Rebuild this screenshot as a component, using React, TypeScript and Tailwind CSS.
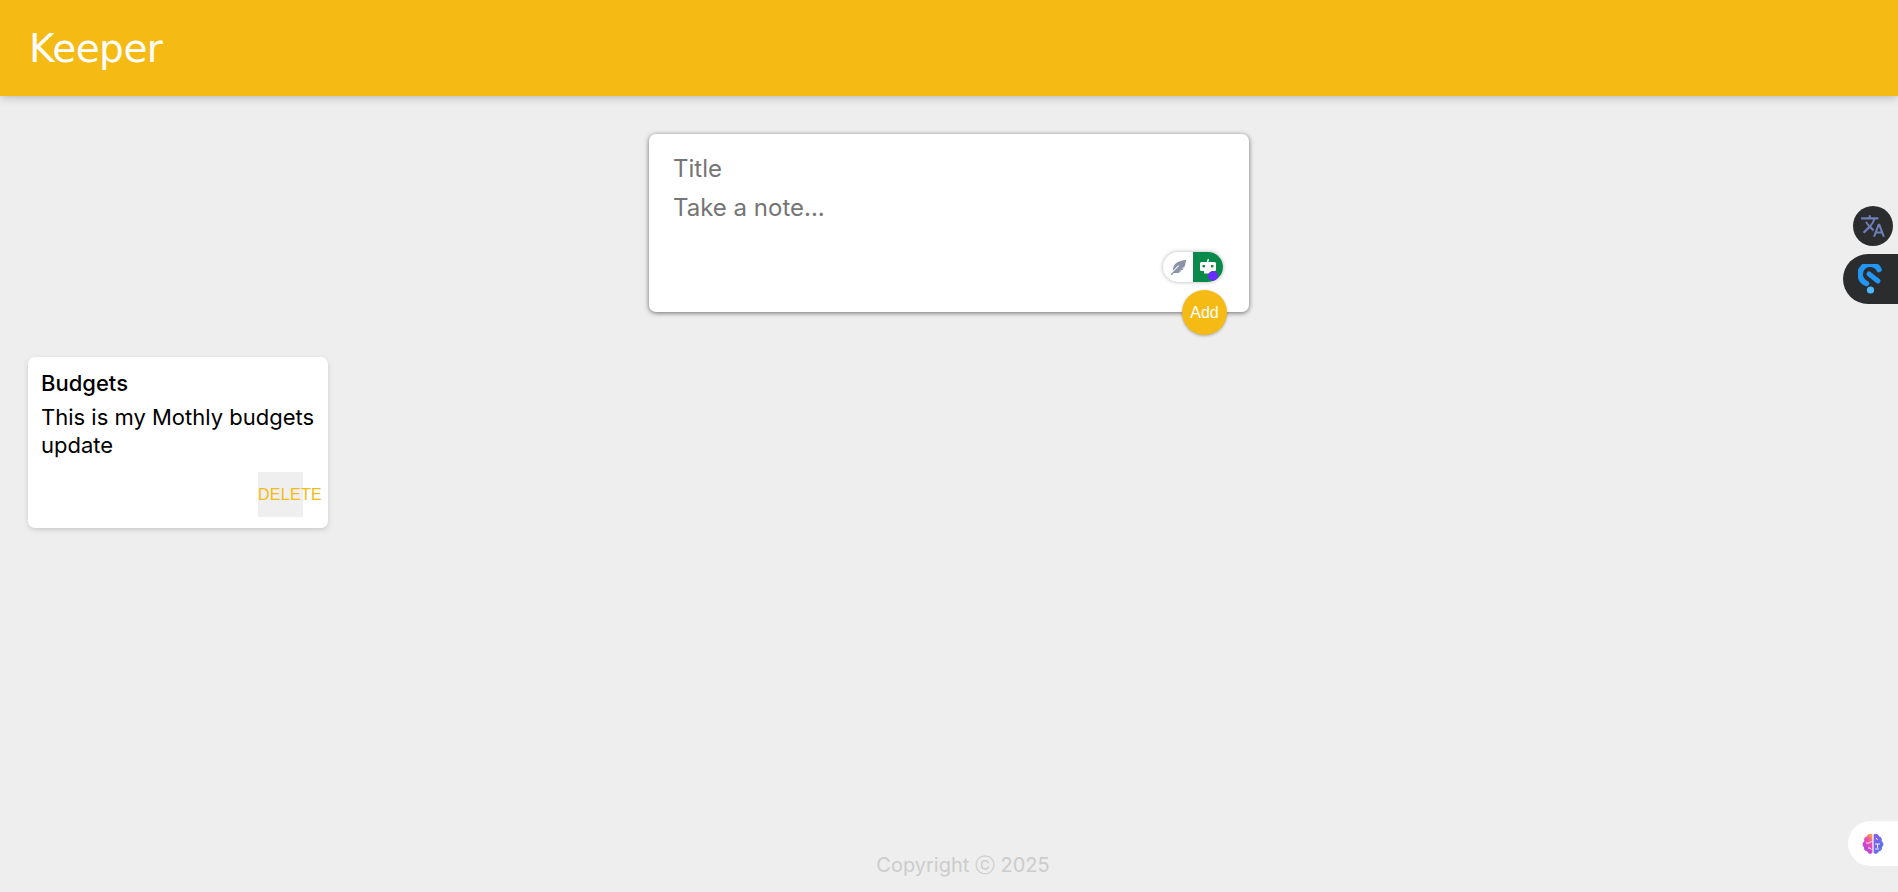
import { MdTranslate } from "react-icons/md";
import { FaFeatherAlt } from "react-icons/fa";

const body = "[font-family:Inter,'Noto_Sans',sans-serif]";

function Bot() {
  return (
    <svg width="20" height="20" viewBox="0 0 20 20" fill="none">
      <path d="M10.5 2 L9.5 5" stroke="#fff" strokeWidth="1.5" />
      <rect x="2" y="5" width="16" height="9" rx="1.5" fill="#fff" />
      <rect x="4.5" y="8" width="2.4" height="2.4" fill="#0a8a4a" />
      <rect x="13" y="8" width="2.4" height="2.4" fill="#0a8a4a" />
      <rect x="6" y="14" width="8" height="2.5" fill="#fff" />
    </svg>
  );
}

function Spot() {
  return (
    <svg width="26" height="30" viewBox="0 0 26 30" fill="none">
      <path d="M21 5.5 A10 10 0 1 0 8.5 19.5" stroke="#2196f3" strokeWidth="5.5" strokeLinecap="round" />
      <path d="M11 10 L20 17" stroke="#2196f3" strokeWidth="5" strokeLinecap="round" />
      <circle cx="12.5" cy="26" r="3.6" fill="#4db8ff" />
    </svg>
  );
}

function Brain() {
  return (
    <svg width="24" height="24" viewBox="0 0 24 24" fill="none">
      <defs>
        <linearGradient id="brainLeft" x1="0.8" y1="0" x2="0.2" y2="1">
          <stop offset="0" stopColor="#f9a03f" />
          <stop offset="0.35" stopColor="#ec4fb0" />
          <stop offset="1" stopColor="#a03ff0" />
        </linearGradient>
        <linearGradient id="brainRight" x1="0" y1="0" x2="1" y2="1">
          <stop offset="0" stopColor="#8a5cf0" />
          <stop offset="1" stopColor="#4f78ee" />
        </linearGradient>
      </defs>
      <path d="M11.4 2.5C9 1 6.5 2 6 4.3 3.6 4.8 2.6 7 3.4 9 1.2 10.6 1 13.6 3 15c-.4 2.6 1.3 4.3 3.4 4.4.8 2.4 3.6 3 5 1.4Z" fill="url(#brainLeft)" />
      <path d="M12.6 2.5C15 1 17.5 2 18 4.3c2.4.5 3.4 2.7 2.6 4.7 2.2 1.6 2.4 4.6.4 6 .4 2.6-1.3 4.3-3.4 4.4-.8 2.4-3.6 3-5 1.4Z" fill="url(#brainRight)" />
      <path d="M5 11h3.5l2-2M7 16h2l1.5 1.5M15 6l1.5 2M14 12h5M16.5 12v4M14 17h4" stroke="#fff" strokeWidth="0.9" />
    </svg>
  );
}

export default function App() {
  return (
    <div className={`relative flex min-h-screen flex-col overflow-hidden bg-[#eeeeee] ${body}`}>
      <header className="flex h-24 items-center bg-[#f5ba13] pl-[29px] shadow-[0_0_10px_rgba(0,0,0,0.3)]">
        <h1 className="[font-family:'DejaVu_Sans',sans-serif] text-[39px] leading-none font-normal tracking-[-0.5px] text-white">Keeper</h1>
      </header>

      <main className="flex-1">
        <div className="relative mx-auto mt-[38px] h-[178px] w-[600px] rounded-[7px] bg-white px-6 pt-[19px] shadow-[0_1px_5px_rgba(0,0,0,0.55)]">
          <div className="text-[24px] leading-[32px] text-[#757575]">Title</div>
          <div className="mt-[7px] text-[24px] leading-[32px] text-[#757575]">Take a note...</div>

          <div className="absolute top-[118px] left-[514px] flex h-[30px] w-[60px] overflow-hidden rounded-full bg-white shadow-[0_0_4px_rgba(0,0,0,0.3)]">
            <div className="flex w-[30px] items-center justify-center text-[#8a94a6]">
              <FaFeatherAlt size={15} />
            </div>
            <div className="relative flex w-[30px] items-center justify-center bg-[#0a8a4a]">
              <Bot />
              <span className="absolute top-[19px] left-[15px] h-[10px] w-[10px] rounded-full bg-[#6a2cff]" />
            </div>
          </div>

          <button className="absolute top-[156px] left-[533px] h-[45px] w-[45px] rounded-full bg-[#f5ba13] [font-family:'Liberation_Sans',sans-serif] text-[16px] text-white shadow-[0_1px_3px_rgba(0,0,0,0.3)]">
            Add
          </button>
        </div>

        <div className="mt-[45px] ml-[28px] h-[171px] w-[300px] rounded-[7px] bg-white px-[13px] pt-[13px] shadow-[0_2px_5px_#cccccc]">
          <h2 className="text-[22px] leading-[27px] font-medium text-black">Budgets</h2>
          <p className="mt-[6px] text-[22px] leading-[28px] text-black">This is my Mothly budgets update</p>
          <div className="mt-[13px] ml-[217px] flex h-[45px] w-[45px] items-center bg-[#efefef]">
            <button className="[font-family:'Liberation_Sans',sans-serif] text-[16px] tracking-[0.3px] whitespace-nowrap text-[#f5ba13]">DELETE</button>
          </div>
        </div>
      </main>

      <footer className="pb-[15px] pl-[28px] text-center text-[20px] leading-[24px] text-[#cccccc]">Copyright ⓒ 2025</footer>

      <div className="absolute top-[206px] right-[5px] flex h-10 w-10 items-center justify-center rounded-full bg-[#2b2c2e] text-[#6f7fb8]">
        <MdTranslate size={26} />
      </div>
      <div className="absolute top-[254px] right-0 flex h-[50px] w-[55px] items-center rounded-l-full bg-[#2b2c2e] pl-[15px]">
        <Spot />
      </div>
      <div className="absolute top-[821px] right-0 flex h-[45px] w-[50px] items-center rounded-l-full bg-white pl-[13px]">
        <Brain />
      </div>
    </div>
  );
}
